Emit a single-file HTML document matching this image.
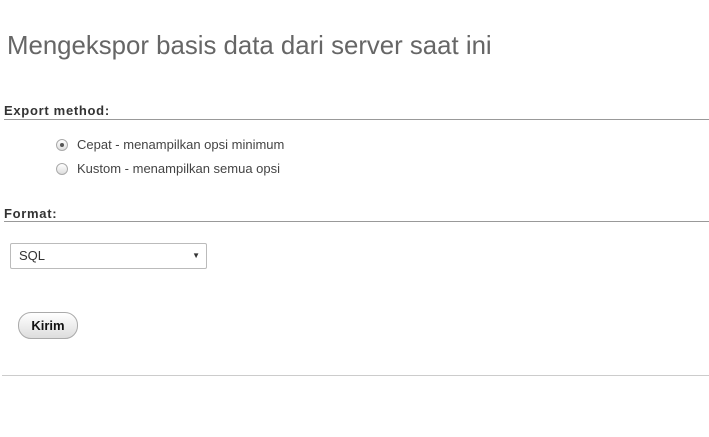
<!DOCTYPE html>
<html><head><style>
body{margin:0;width:709px;height:437px;background:#fff;font-family:"Liberation Sans",sans-serif;position:relative;overflow:hidden}
.a{position:absolute;white-space:nowrap}
h1{position:absolute;left:7px;top:32px;margin:0;font-weight:normal;font-size:25.8px;color:#666;white-space:nowrap}
.lab{font-weight:bold;font-size:13px;color:#333;left:4px;letter-spacing:0.7px}
.line{left:4px;right:0;height:1px;background:#999}
.r{font-size:13px;color:#444;left:56px}
.r i{display:inline-block;width:10px;height:10px;border:1px solid #aaa;border-radius:50%;background:linear-gradient(#fff,#ddd);vertical-align:-2px;margin-right:9px;position:relative}
.r i.on:after{content:"";position:absolute;left:3px;top:3px;width:4px;height:4px;border-radius:50%;background:#555}
</style></head><body>
<h1>Mengekspor basis data dari server saat ini</h1>
<div class="a lab" style="top:103px">Export method:</div>
<div class="a line" style="top:119px"></div>
<div class="a r" style="top:137px"><i class="on"></i>Cepat - menampilkan opsi minimum</div>
<div class="a r" style="top:161px"><i></i>Kustom - menampilkan semua opsi</div>
<div class="a lab" style="top:206px">Format:</div>
<div class="a line" style="top:221px"></div>
<div class="a" style="left:10px;top:243px;width:197px;height:26px;border:1px solid #bbb;border-radius:2px;font-size:13px;color:#333;box-sizing:border-box;line-height:24px;padding-left:8px">SQL<span style="position:absolute;right:6px;font-size:8px">▼</span></div>
<div class="a" style="left:18px;top:312px;width:60px;height:27px;border:1px solid #aaa;border-radius:13px;background:linear-gradient(#fff,#ddd);box-sizing:border-box;text-align:center;line-height:25px;font-weight:bold;font-size:13px;color:#111">Kirim</div>
<div class="a" style="left:2px;right:0;top:375px;height:1px;background:#ccc"></div>
</body></html>
